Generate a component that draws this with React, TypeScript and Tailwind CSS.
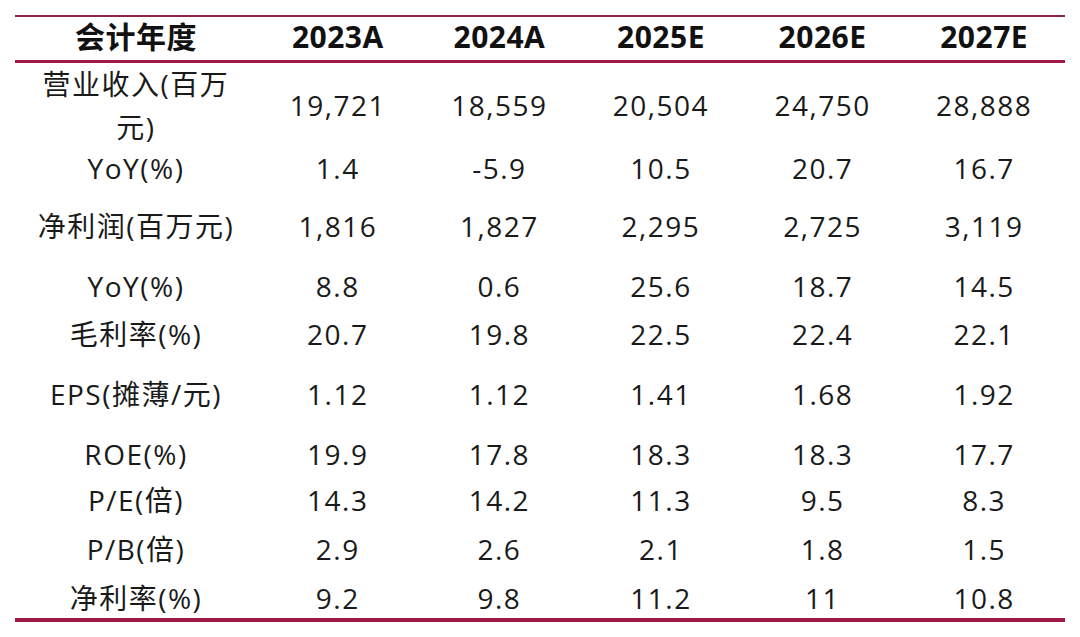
const years = ["2023A", "2024A", "2025E", "2026E", "2027E"];

const rows: { label: React.ReactNode; values: string[]; h: string }[] = [
  {
    label: (
      <>
        营业收入(百万
        <br />
        元)
      </>
    ),
    values: ["19,721", "18,559", "20,504", "24,750", "28,888"],
    h: "h-[85px]",
  },
  { label: "YoY(%)", values: ["1.4", "-5.9", "10.5", "20.7", "16.7"], h: "h-[40px]" },
  { label: "净利润(百万元)", values: ["1,816", "1,827", "2,295", "2,725", "3,119"], h: "h-[76px]" },
  { label: "YoY(%)", values: ["8.8", "0.6", "25.6", "18.7", "14.5"], h: "h-[44px]" },
  { label: "毛利率(%)", values: ["20.7", "19.8", "22.5", "22.4", "22.1"], h: "h-[52px]" },
  { label: "EPS(摊薄/元)", values: ["1.12", "1.12", "1.41", "1.68", "1.92"], h: "h-[68px]" },
  { label: "ROE(%)", values: ["19.9", "17.8", "18.3", "18.3", "17.7"], h: "h-[52px]" },
  { label: "P/E(倍)", values: ["14.3", "14.2", "11.3", "9.5", "8.3"], h: "h-[40px]" },
  { label: "P/B(倍)", values: ["2.9", "2.6", "2.1", "1.8", "1.5"], h: "h-[58px]" },
  { label: "净利率(%)", values: ["9.2", "9.8", "11.2", "11", "10.8"], h: "h-[40px]" },
];

export default function App() {
  return (
    <div className="w-[1080px] h-[637px] bg-white pt-[15px] pl-[15px] font-['Open_Sans','Noto_Sans_CJK_SC',sans-serif] text-[#1a1a1a]">
      <div className="w-[1050px]">
        <div className="h-[2px] bg-[#8c2446]" />
        <div className="flex h-[43px] items-center pb-[3px] text-[30px] font-bold leading-none tracking-[0.5px] text-[#111]">
          <div className="w-[242px] text-center">会计年度</div>
          {years.map((y) => (
            <div key={y} className="flex-1 text-center">
              {y}
            </div>
          ))}
        </div>
        <div className="h-[3px] bg-[#a01a45]" />
        {rows.map((r, i) => (
          <div
            key={i}
            className={`flex items-center text-[28px] leading-[43px] tracking-[1.5px] ${r.h}`}
          >
            <div className="w-[242px] text-center">{r.label}</div>
            {r.values.map((v, j) => (
              <div key={j} className="flex-1 text-center">
                {v}
              </div>
            ))}
          </div>
        ))}
        <div className="h-[4px] bg-[#a01a45]" />
      </div>
    </div>
  );
}
